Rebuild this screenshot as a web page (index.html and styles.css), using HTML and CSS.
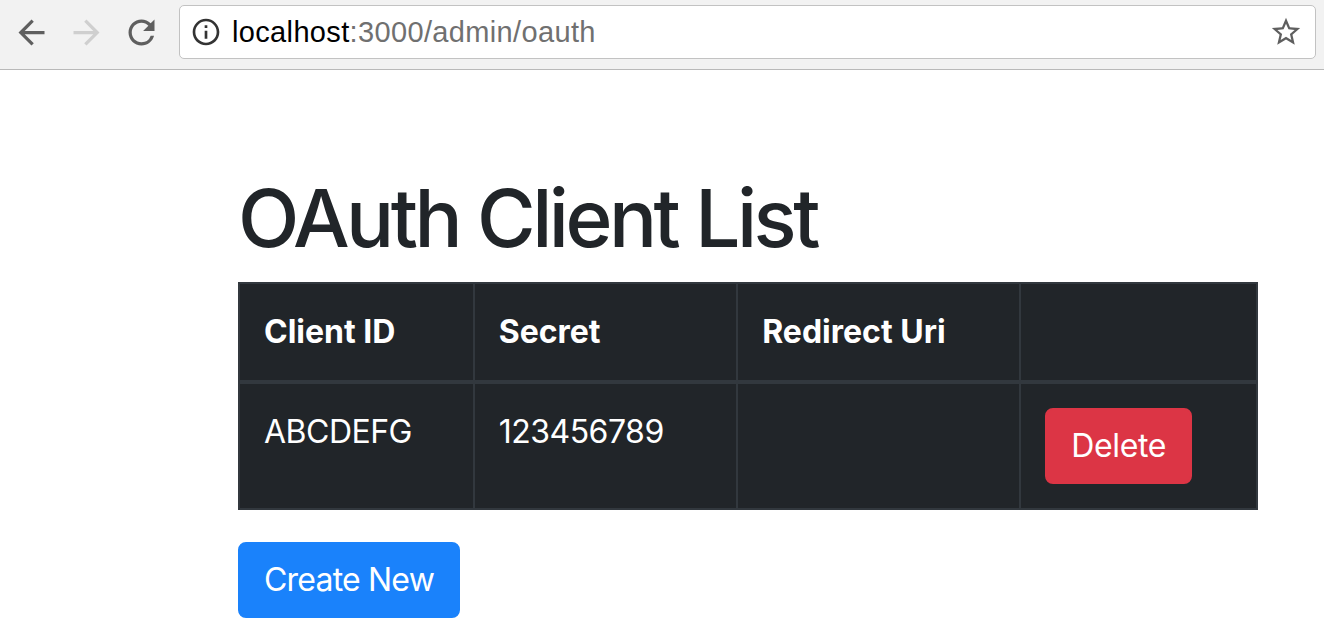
FILE: index.html
```html
<!DOCTYPE html>
<html>
<head>
<meta charset="utf-8">
<title>OAuth Client List</title>
<link rel="stylesheet" href="styles.css">
</head>
<body>
<header class="toolbar">
  <div class="nav">
    <span class="nav-btn">
      <svg viewBox="0 0 24 24" width="39" height="39"><path fill="#5f5f5f" d="M20 11H7.83l5.59-5.59L12 4l-8 8 8 8 1.41-1.41L7.83 13H20v-2z"/></svg>
    </span>
    <span class="nav-btn">
      <svg viewBox="0 0 24 24" width="39" height="39"><path fill="#cfcfcf" d="M4 11h12.17l-5.59-5.59L12 4l8 8-8 8-1.41-1.41L16.17 13H4v-2z"/></svg>
    </span>
    <span class="nav-btn">
      <svg viewBox="0 0 24 24" width="39" height="39"><path fill="#5f5f5f" d="M17.65 6.35A7.958 7.958 0 0 0 12 4c-4.420 0-7.99 3.58-7.99 8s3.57 8 7.99 8c3.73 0 6.84-2.55 7.73-6h-2.08A5.99 5.99 0 0 1 12 18c-3.31 0-6-2.69-6-6s2.690-6 6-6c1.66 0 3.14.69 4.22 1.78L13 11h7V4l-2.35 2.35z"/></svg>
    </span>
  </div>
  <div class="omnibox">
    <svg class="info" viewBox="0 0 24 24" width="32" height="32"><path fill="#333" d="M11 7h2v2h-2zm0 4h2v6h-2zm1-9C6.48 2 2 6.48 2 12s4.48 10 10 10 10-4.48 10-10S17.52 2 12 2zm0 18c-4.41 0-8-3.59-8-8s3.59-8 8-8 8 3.59 8 8-3.59 8-8 8z"/></svg>
    <span class="url"><span class="host">localhost</span><span class="path">:3000/admin/oauth</span></span>
    <svg class="star" viewBox="0 0 24 24" width="34" height="34"><path fill="#5f5f5f" d="M22 9.24l-7.19-.62L12 2 9.19 8.63 2 9.24l5.46 4.73L5.82 21 12 17.27 18.18 21l-1.63-7.03L22 9.24zM12 15.4l-3.76 2.27 1-4.28-3.32-2.88 4.38-.38L12 6.1l1.71 4.04 4.38.38-3.32 2.88 1 4.28L12 15.4z"/></svg>
  </div>
</header>
<main class="container">
  <h1 class="title">OAuth Client List</h1>
  <table class="clients">
    <colgroup>
      <col class="c1"><col class="c2"><col class="c3"><col class="c4">
    </colgroup>
    <thead>
      <tr><th>Client ID</th><th>Secret</th><th>Redirect Uri</th><th></th></tr>
    </thead>
    <tbody>
      <tr><td>ABCDEFG</td><td>123456789</td><td></td><td><button class="btn btn-danger">Delete</button></td></tr>
    </tbody>
  </table>
  <button class="btn btn-primary">Create New</button>
</main>
</body>
</html>
```
FILE: styles.css
```css
* { box-sizing: border-box; }
html, body { margin: 0; padding: 0; background: #fff; }
body { font-family: Inter, "Liberation Sans", sans-serif; color: #212529; }

.toolbar {
  height: 70px;
  background: #f2f2f2;
  border-bottom: 1px solid #b9b9b9;
  display: flex;
  align-items: flex-start;
  padding: 5px 8px 0 11px;
}
.nav { display: flex; gap: 15px; height: 54px; align-items: center; margin-right: 18px; }
.nav-btn { width: 40px; height: 40px; display: flex; align-items: center; justify-content: center; }
.omnibox {
  flex: 1;
  height: 54px;
  background: #fff;
  border: 1px solid #c2c2c2;
  border-radius: 5px;
  display: flex;
  align-items: center;
  padding: 0 12px 0 10px;
}
.info { margin-right: 10px; }
.url { font-family: "Liberation Sans", Arial, sans-serif; font-size: 29px; letter-spacing: 0.35px; flex: 1; }
.host { color: #000; }
.path { color: #707070; }

.container { padding: 100px 67px 40px 238px; }
.title {
  font-size: 80px;
  font-weight: 500;
  line-height: 96px;
  margin: 0 0 16px;
  letter-spacing: -3.5px;
}
.clients {
  width: 1020px;
  border-collapse: collapse;
  background: #212529;
  color: #fff;
  margin-bottom: 32px;
  font-size: 32px;
  line-height: 48px;
  border: 2px solid #32383e;
}
.c1 { width: 235px; } .c2 { width: 264px; } .c3 { width: 284px; } .c4 { width: 237px; }
.clients th, .clients td {
  border: 2px solid #32383e;
  padding: 24px;
  text-align: left;
  vertical-align: top;
}
.clients th { font-weight: 700; border-bottom-width: 4px; letter-spacing: 0; }
.clients td { font-weight: 400; letter-spacing: -0.5px; }

.btn {
  font-family: Inter, "Liberation Sans", sans-serif;
  font-size: 32px;
  line-height: 48px;
  padding: 12px 24px;
  border: 2px solid transparent;
  border-radius: 8px;
  color: #fff;
  cursor: pointer;
  display: inline-block;
  letter-spacing: -0.4px;
}
.btn-primary { letter-spacing: -0.8px; }
.btn-danger { background: #dc3545; border-color: #dc3545; }
.btn-primary { background: #1a82fb; border-color: #1a82fb; }
```
